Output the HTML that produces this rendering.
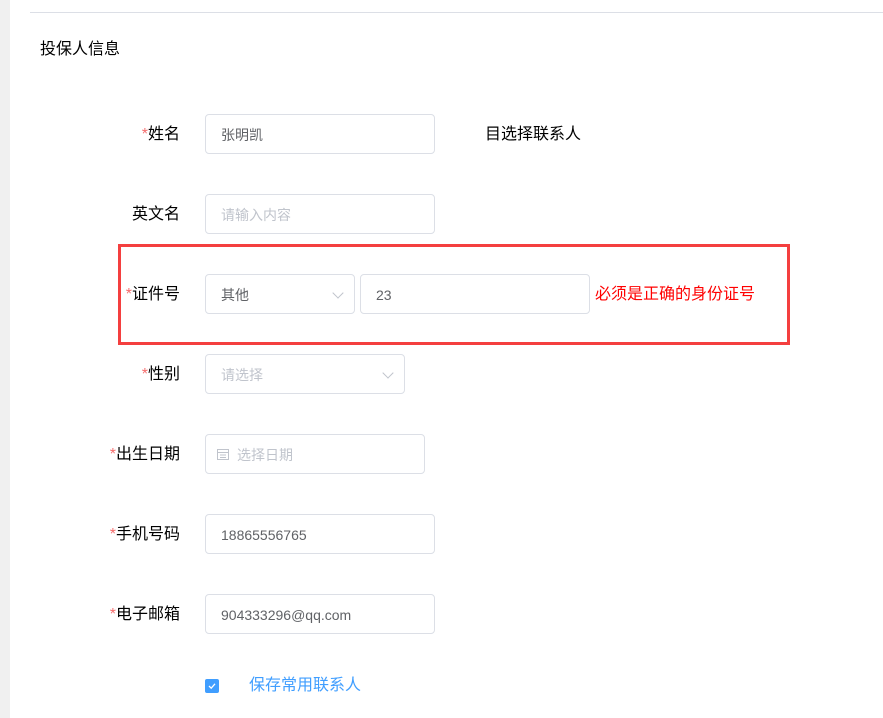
<!DOCTYPE html>
<html><head><meta charset="utf-8"><style>
*{margin:0;padding:0;box-sizing:border-box}
body{width:883px;height:718px;background:#fff;position:relative;overflow:hidden;font-family:"Liberation Sans","Noto Sans CJK SC",sans-serif;font-size:14px;color:#303133}
.strip{position:absolute;left:0;top:0;width:10px;height:718px;background:#f0f0f0}
.line{position:absolute;left:30px;right:0;top:12px;height:1px;background:#dcdfe6}
.t{position:absolute;left:40px;top:35px;font-size:16px;color:#000}
.lab{position:absolute;right:703px;width:120px;text-align:right;font-size:16px;color:#000;line-height:20px}
.lab i{color:#f56c6c;font-style:normal}
.box{position:absolute;height:40px;border:1px solid #dcdfe6;border-radius:4px;padding-left:15px;line-height:40px;font-size:14px;color:#606266}
.ph{color:#c0c4cc}
.arr{position:absolute;right:12px;top:14px;width:8px;height:8px;border-right:1px solid #c0c4cc;border-bottom:1px solid #c0c4cc;transform:rotate(45deg)}
.red{position:absolute;left:118px;top:244px;width:672px;height:101px;border:3px solid #f43f3f}
</style></head><body>
<div class="strip"></div><div class="line"></div>
<div class="t">投保人信息</div>

<div class="lab" style="top:125px"><i>*</i>姓名</div>
<div class="box" style="left:205px;top:114px;width:230px">张明凯</div>
<div style="position:absolute;left:485px;top:125px;font-size:16px;line-height:20px;color:#000">目选择联系人</div>

<div class="lab" style="top:205px">英文名</div>
<div class="box ph" style="left:205px;top:194px;width:230px">请输入内容</div>

<div class="lab" style="top:285px"><i>*</i>证件号</div>
<div class="box" style="left:205px;top:274px;width:150px">其他<span class="arr"></span></div>
<div class="box" style="left:360px;top:274px;width:230px">23</div>
<div style="position:absolute;left:595px;top:285px;font-size:16px;line-height:20px;color:#f00">必须是正确的身份证号</div>
<div class="red"></div>

<div class="lab" style="top:365px"><i>*</i>性别</div>
<div class="box ph" style="left:205px;top:354px;width:200px">请选择<span class="arr"></span></div>

<div class="lab" style="top:445px"><i>*</i>出生日期</div>
<div class="box ph" style="left:205px;top:434px;width:220px;padding-left:31px">
<svg style="position:absolute;left:10px;top:12px" width="14" height="14" viewBox="0 0 14 14" fill="none" stroke="#c0c4cc"><rect x="1.5" y="2.5" width="11" height="10"/><line x1="1.5" y1="5.5" x2="12.5" y2="5.5"/><line x1="4" y1="8" x2="10" y2="8"/><line x1="4" y1="10.5" x2="10" y2="10.5"/></svg>选择日期</div>

<div class="lab" style="top:525px"><i>*</i>手机号码</div>
<div class="box" style="left:205px;top:514px;width:230px">18865556765</div>

<div class="lab" style="top:605px"><i>*</i>电子邮箱</div>
<div class="box" style="left:205px;top:594px;width:230px">904333296@qq.com</div>

<div style="position:absolute;left:205px;top:679px;width:14px;height:14px;background:#409eff;border-radius:2px">
<svg width="14" height="14" viewBox="0 0 14 14"><path d="M4 7 L6.2 9.2 L10 4.8" fill="none" stroke="#fff" stroke-width="1.3"/></svg></div>
<div style="position:absolute;left:249px;top:676px;font-size:16px;line-height:20px;color:#409eff">保存常用联系人</div>
</body></html>
